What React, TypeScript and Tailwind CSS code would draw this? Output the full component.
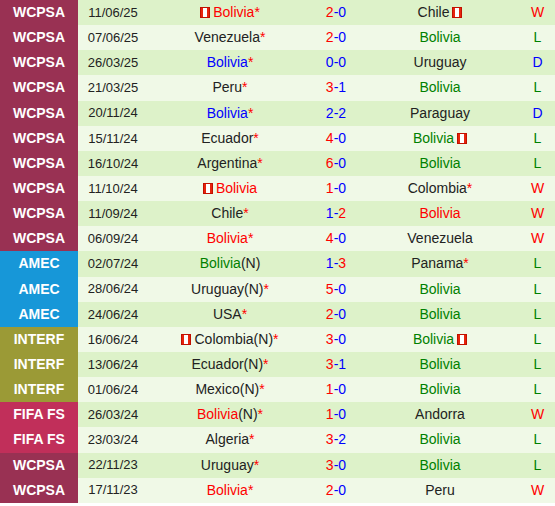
import React from 'react';

type Part = { t: string; c?: string };
type Row = {
  comp: string;
  date: string;
  home: Part[];
  homeFlag?: 'before' | 'after';
  score: [number, number];
  away: Part[];
  awayFlag?: 'before' | 'after';
  res: 'W' | 'L' | 'D';
};

const RED = 'text-[#ff0000]';
const BLUE = 'text-[#0000ff]';
const GREEN = 'text-[#008000]';
const STAR = { t: '*', c: RED };

const rows: Row[] = [
  { comp: 'WCPSA', date: '11/06/25', home: [{ t: 'Bolivia', c: RED }, STAR], homeFlag: 'before', score: [2, 0], away: [{ t: 'Chile' }], awayFlag: 'after', res: 'W' },
  { comp: 'WCPSA', date: '07/06/25', home: [{ t: 'Venezuela' }, STAR], score: [2, 0], away: [{ t: 'Bolivia', c: GREEN }], res: 'L' },
  { comp: 'WCPSA', date: '26/03/25', home: [{ t: 'Bolivia', c: BLUE }, STAR], score: [0, 0], away: [{ t: 'Uruguay' }], res: 'D' },
  { comp: 'WCPSA', date: '21/03/25', home: [{ t: 'Peru' }, STAR], score: [3, 1], away: [{ t: 'Bolivia', c: GREEN }], res: 'L' },
  { comp: 'WCPSA', date: '20/11/24', home: [{ t: 'Bolivia', c: BLUE }, STAR], score: [2, 2], away: [{ t: 'Paraguay' }], res: 'D' },
  { comp: 'WCPSA', date: '15/11/24', home: [{ t: 'Ecuador' }, STAR], score: [4, 0], away: [{ t: 'Bolivia', c: GREEN }], awayFlag: 'after', res: 'L' },
  { comp: 'WCPSA', date: '16/10/24', home: [{ t: 'Argentina' }, STAR], score: [6, 0], away: [{ t: 'Bolivia', c: GREEN }], res: 'L' },
  { comp: 'WCPSA', date: '11/10/24', home: [{ t: 'Bolivia', c: RED }], homeFlag: 'before', score: [1, 0], away: [{ t: 'Colombia' }, STAR], res: 'W' },
  { comp: 'WCPSA', date: '11/09/24', home: [{ t: 'Chile' }, STAR], score: [1, 2], away: [{ t: 'Bolivia', c: RED }], res: 'W' },
  { comp: 'WCPSA', date: '06/09/24', home: [{ t: 'Bolivia', c: RED }, STAR], score: [4, 0], away: [{ t: 'Venezuela' }], res: 'W' },
  { comp: 'AMEC', date: '02/07/24', home: [{ t: 'Bolivia', c: GREEN }, { t: '(N)' }], score: [1, 3], away: [{ t: 'Panama' }, STAR], res: 'L' },
  { comp: 'AMEC', date: '28/06/24', home: [{ t: 'Uruguay(N)' }, STAR], score: [5, 0], away: [{ t: 'Bolivia', c: GREEN }], res: 'L' },
  { comp: 'AMEC', date: '24/06/24', home: [{ t: 'USA' }, STAR], score: [2, 0], away: [{ t: 'Bolivia', c: GREEN }], res: 'L' },
  { comp: 'INTERF', date: '16/06/24', home: [{ t: 'Colombia(N)' }, STAR], homeFlag: 'before', score: [3, 0], away: [{ t: 'Bolivia', c: GREEN }], awayFlag: 'after', res: 'L' },
  { comp: 'INTERF', date: '13/06/24', home: [{ t: 'Ecuador(N)' }, STAR], score: [3, 1], away: [{ t: 'Bolivia', c: GREEN }], res: 'L' },
  { comp: 'INTERF', date: '01/06/24', home: [{ t: 'Mexico(N)' }, STAR], score: [1, 0], away: [{ t: 'Bolivia', c: GREEN }], res: 'L' },
  { comp: 'FIFA FS', date: '26/03/24', home: [{ t: 'Bolivia', c: RED }, { t: '(N)' }, STAR], score: [1, 0], away: [{ t: 'Andorra' }], res: 'W' },
  { comp: 'FIFA FS', date: '23/03/24', home: [{ t: 'Algeria' }, STAR], score: [3, 2], away: [{ t: 'Bolivia', c: GREEN }], res: 'L' },
  { comp: 'WCPSA', date: '22/11/23', home: [{ t: 'Uruguay' }, STAR], score: [3, 0], away: [{ t: 'Bolivia', c: GREEN }], res: 'L' },
  { comp: 'WCPSA', date: '17/11/23', home: [{ t: 'Bolivia', c: RED }, STAR], score: [2, 0], away: [{ t: 'Peru' }], res: 'W' },
];

const compBg: Record<string, string> = {
  WCPSA: 'bg-[#993153]',
  AMEC: 'bg-[#1797d8]',
  INTERF: 'bg-[#9b9a36]',
  'FIFA FS': 'bg-[#c12f5a]',
};

const resColor = { W: RED, L: GREEN, D: BLUE };

const Flag = () => (
  <span className="inline-flex h-[11px] w-[10px] items-stretch justify-center bg-[#e8240c] px-[3px] py-[1px] shadow-[inset_0_0_0_1px_#c01000]">
    <span className="w-[4px] bg-white" />
  </span>
);

const Team = ({ parts, flag }: { parts: Part[]; flag?: 'before' | 'after' }) => (
  <span className="inline-flex items-center gap-[3px]">
    {flag === 'before' && <Flag />}
    <span>
      {parts.map((p, i) => (
        <span key={i} className={p.c ?? 'text-[#222]'}>{p.t}</span>
      ))}
    </span>
    {flag === 'after' && <Flag />}
  </span>
);

const Score = ({ s }: { s: [number, number] }) => {
  const [a, b] = s;
  return (
    <span>
      <span className={a > b ? RED : BLUE}>{a}</span>
      <span className={BLUE}>-</span>
      <span className={b > a ? RED : BLUE}>{b}</span>
    </span>
  );
};

export default function App() {
  return (
    <div className="w-[555px] bg-white text-[14px] font-['Liberation_Sans',Arial,sans-serif]">
      {rows.map((r, i) => (
        <div
          key={i}
          className={`flex h-[25.15px] items-center ${i % 2 === 0 ? 'bg-[#ddf2c9]' : 'bg-[#f0f9e7]'}`}
        >
          <div className={`flex h-full w-[78px] items-center justify-center font-bold text-white ${compBg[r.comp]}`}>
            {r.comp}
          </div>
          <div className="w-[70px] text-center text-[13px] text-[#222]">{r.date}</div>
          <div className="w-[164px] text-center">
            <Team parts={r.home} flag={r.homeFlag} />
          </div>
          <div className="w-[48px] text-center">
            <Score s={r.score} />
          </div>
          <div className="w-[160px] text-center">
            <Team parts={r.away} flag={r.awayFlag} />
          </div>
          <div className={`w-[35px] text-center ${resColor[r.res]}`}>{r.res}</div>
        </div>
      ))}
    </div>
  );
}
